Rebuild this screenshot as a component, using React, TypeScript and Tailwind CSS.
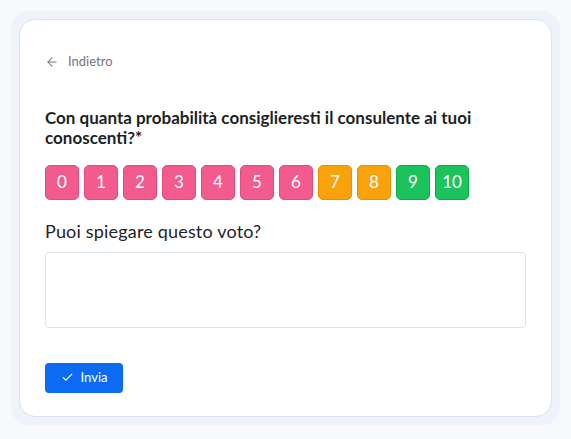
import { ArrowLeft, Check } from "lucide-react";

const scores = [0, 1, 2, 3, 4, 5, 6, 7, 8, 9, 10];

function scoreClass(n: number) {
  if (n <= 6) return "bg-[#f35b8f] border-[#e14c80]";
  if (n <= 8) return "bg-[#f9a20b] border-[#e39300]";
  return "bg-[#1bc35c] border-[#12a94c]";
}

export default function App() {
  return (
    <div
      className="min-h-screen w-full bg-[#f8f9fc] p-[11px]"
      style={{ fontFamily: "Lato, 'Noto Sans', sans-serif" }}
    >
      <div className="rounded-[18px] bg-[#edf2fb] p-2">
        <div className="rounded-[16px] border border-[#d9e2f0] bg-white px-[25px] pt-[32px] pb-[23px]">
          <button className="flex items-center gap-[9px] text-[13px] text-[#70757d]">
            <ArrowLeft className="h-[14px] w-[14px]" strokeWidth={1.8} />
            <span>Indietro</span>
          </button>

          <h2 className="mt-[36px] text-[17px] font-bold leading-[20px] text-[#1c1f24]">
            Con quanta probabilità consiglieresti il consulente ai tuoi conoscenti?*
          </h2>

          <div className="mt-[17px] flex gap-[5px]">
            {scores.map((n) => (
              <button
                key={n}
                className={`flex h-[35px] w-[34px] items-center justify-center rounded-[5px] border text-[17px] font-normal text-white ${scoreClass(n)}`}
              >
                {n}
              </button>
            ))}
          </div>

          <p className="mt-[20px] text-[18px] leading-[22px] tracking-[0.01em] text-[#1f2329]">Puoi spiegare questo voto?</p>

          <textarea className="mt-[10px] block h-[76px] w-full resize-none rounded-[4px] border border-[#d9e3ec] outline-none" />

          <button className="mt-[35px] flex h-[30px] w-[78px] items-center justify-center gap-[7px] rounded-[4px] bg-[#0b6cf3] text-[13px] text-white">
            <Check className="h-[13px] w-[13px]" strokeWidth={2} />
            <span>Invia</span>
          </button>
        </div>
      </div>
    </div>
  );
}
